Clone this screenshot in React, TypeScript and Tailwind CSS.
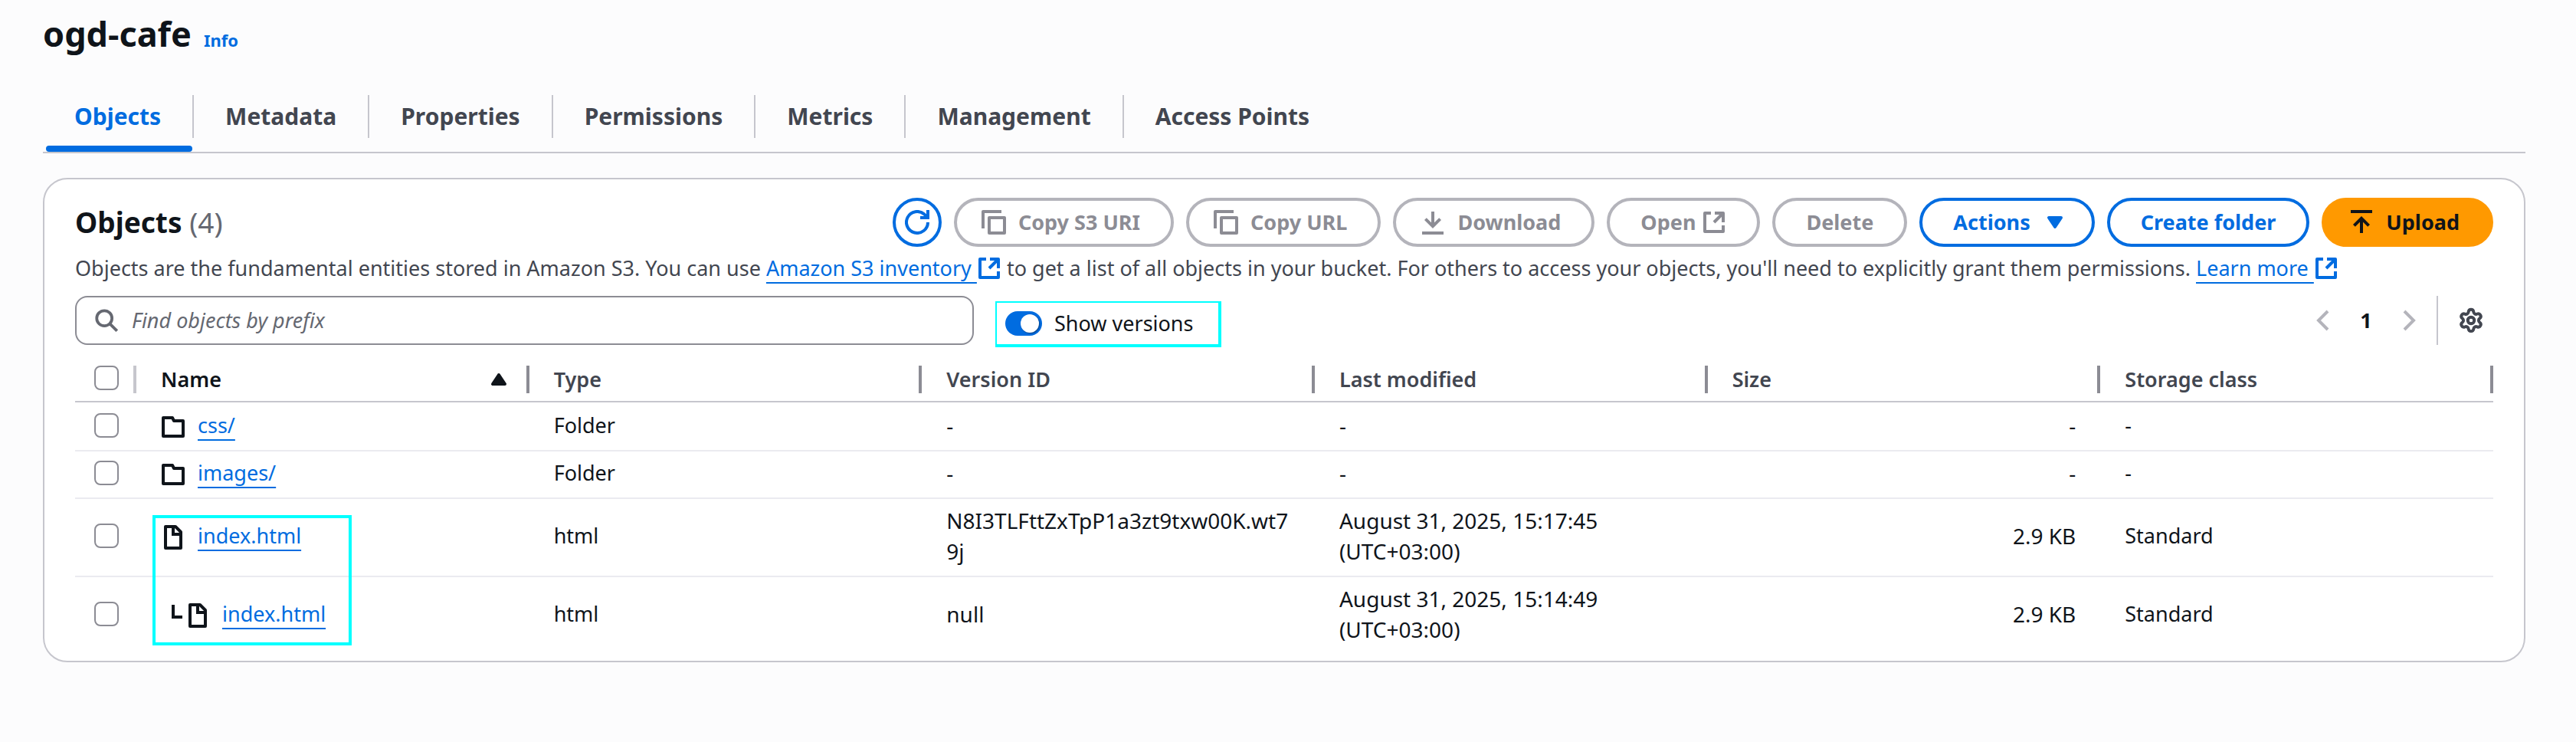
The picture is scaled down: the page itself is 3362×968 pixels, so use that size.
import type { ReactNode } from "react";
import { Settings } from "lucide-react";

type IconProps = { children: ReactNode; className?: string };

function Icon({ children, className = "" }: IconProps) {
  return (
    <svg
      viewBox="0 0 16 16"
      fill="none"
      stroke="currentColor"
      strokeWidth="2"
      aria-hidden="true"
      className={`size-8 shrink-0 ${className}`}
    >
      {children}
    </svg>
  );
}

const CopyIcon = () => (
  <Icon className="-ml-2">
    <path d="M13 1H1v11" strokeLinejoin="round" />
    <path d="M5 5h10v10H5z" strokeLinejoin="round" />
  </Icon>
);

const DownloadIcon = () => (
  <Icon className="-ml-2">
    <path d="M1 15h14M8 1v10M3.2 5.8 8 10.6l4.8-4.8" />
  </Icon>
);

const UploadIcon = () => (
  <Icon className="-ml-2">
    <path d="M1 1h14M8 15V5M3.2 10.2 8 5.4l4.8 4.8" />
  </Icon>
);

const RefreshIcon = () => (
  <Icon>
    <path d="M15 8a7 7 0 1 1-2.3-5.2L15 5" />
    <path d="M15 0v5h-5" />
  </Icon>
);

const ExternalIcon = ({ className = "" }: { className?: string }) => (
  <Icon className={className}>
    <path d="M6 2H2v12h12v-4" strokeLinejoin="round" />
    <path d="M8.5 2H14v6" strokeLinejoin="round" />
    <path d="M14 2 8 8" />
  </Icon>
);

const FolderIcon = () => (
  <Icon className="mt-1">
    <path d="M1.5 2h6l1 2h6v10h-13z" strokeLinejoin="round" />
  </Icon>
);

const FileIcon = () => (
  <Icon className="mt-1">
    <path d="M3 1h6.5L13 4.5V15H3z" strokeLinejoin="round" />
    <path d="M8 1v5h5" />
  </Icon>
);

const BranchIcon = () => (
  <Icon className="mt-1">
    <path d="M8 1v8h6" />
  </Icon>
);

const tabs = ["Objects", "Metadata", "Properties", "Permissions", "Metrics", "Management", "Access Points"];

const columns = ["Name", "Type", "Version ID", "Last modified", "Size", "Storage class"];

type Row = {
  name: string;
  kind: "folder" | "file";
  nested?: boolean;
  type: string;
  version: string;
  modified: string[];
  size: string;
  storage: string;
};

const rows: Row[] = [
  { name: "css/", kind: "folder", type: "Folder", version: "-", modified: ["-"], size: "-", storage: "-" },
  { name: "images/", kind: "folder", type: "Folder", version: "-", modified: ["-"], size: "-", storage: "-" },
  {
    name: "index.html",
    kind: "file",
    type: "html",
    version: "N8I3TLFttZxTpP1a3zt9txw00K.wt79j",
    modified: ["August 31, 2025, 15:17:45", "(UTC+03:00)"],
    size: "2.9 KB",
    storage: "Standard",
  },
  {
    name: "index.html",
    kind: "file",
    nested: true,
    type: "html",
    version: "null",
    modified: ["August 31, 2025, 15:14:49", "(UTC+03:00)"],
    size: "2.9 KB",
    storage: "Standard",
  },
];

const buttonBase =
  "flex h-16 shrink-0 items-center rounded-full border-4 px-10 text-[27px] leading-10 font-bold whitespace-nowrap";
const disabledButton = `${buttonBase} border-[#b4b4bb] text-[#8c8c94]`;
const normalButton = `${buttonBase} border-[#006ce0] text-[#006ce0]`;

const linkText = "underline decoration-2 underline-offset-8 [text-decoration-skip-ink:none]";

function Checkbox({ label }: { label: string }) {
  return (
    <input
      type="checkbox"
      aria-label={label}
      className="block size-8 appearance-none rounded-lg border-2 border-[#8c8c94] bg-white"
    />
  );
}

function ObjectRow({ row, index }: { row: Row; index: number }) {
  const edge = `${index === 0 ? "pt-2.5" : "pt-2"} ${
    index === rows.length - 1 ? "" : "border-b-2 border-[#ebebf0]"
  }`;
  const cell = `pl-8 pr-8 pb-3 ${edge}`;
  const words = `${cell} text-[27px]`;
  const figures = `${cell} text-[28px]`;
  return (
    <tr>
      <td className={`pb-3 pl-[25px] ${edge}`}>
        <Checkbox label={`Select ${row.name}`} />
      </td>
      <td className={`relative ${words}`}>
        <div className="flex items-center">
          {row.nested && <BranchIcon />}
          {row.kind === "folder" ? <FolderIcon /> : <FileIcon />}
          <a href="#" className={`ml-4 text-[#006ce0] ${linkText}`}>
            {row.name}
          </a>
        </div>
        {index === 2 && (
          <div className="pointer-events-none absolute top-[21px] left-[21px] z-10 h-[170px] w-[260px] border-4 border-[#00ffff]" />
        )}
      </td>
      <td className={words}>{row.type}</td>
      <td className={`${figures} break-all`}>{row.version}</td>
      <td className={figures}>
        {row.modified.map((line) => (
          <div key={line}>{line}</div>
        ))}
      </td>
      <td className={`${figures} text-right`}>{row.size}</td>
      <td className={words}>{row.storage}</td>
    </tr>
  );
}

export default function App() {
  return (
    <main className="min-h-screen bg-[#fcfcfd] px-14 pt-3.5 pr-[66px] pb-8 font-['Noto_Sans','Open_Sans',sans-serif] text-[27px] leading-10 text-[#0f141a]">
      <header className="flex items-baseline gap-4">
        <h1 className="text-[45px] leading-[60px] font-bold">ogd-cafe</h1>
        <a href="#" className="text-[22px] font-bold text-[#006ce0]">
          Info
        </a>
      </header>

      <nav role="tablist" className="mt-[50px] flex border-b-2 border-[#c6c6cd]">
        {tabs.map((tab, i) => (
          <button
            key={tab}
            type="button"
            role="tab"
            aria-selected={i === 0}
            className={`relative flex h-[74px] items-start text-[30px] leading-10 font-bold whitespace-nowrap ${
              i === 0 ? "text-[#006ce0]" : "text-[#424650]"
            }`}
          >
            <span className={`h-14 px-[41px] pt-2 ${i < tabs.length - 1 ? "border-r-2 border-[#c6c6cd]" : ""}`}>
              {tab}
            </span>
            {i === 0 && <span className="absolute right-0.5 bottom-0 left-1 h-2 rounded-sm bg-[#006ce0]" />}
          </button>
        ))}
      </nav>

      <section className="mt-8 rounded-[32px] border-2 border-[#c6c6cd] bg-white px-10 pt-6 pb-[9px]">
        <div className="flex items-center justify-between">
          <h2 className="text-[37px] leading-[48px] font-bold">
            Objects <span className="font-normal text-[#656871]">(4)</span>
          </h2>
          <div className="flex gap-4">
            <button
              type="button"
              aria-label="Refresh"
              className="flex size-16 items-center justify-center rounded-full border-4 border-[#006ce0] text-[#006ce0]"
            >
              <RefreshIcon />
            </button>
            <button type="button" disabled className={`${disabledButton} gap-4`}>
              <CopyIcon />
              Copy S3 URI
            </button>
            <button type="button" disabled className={`${disabledButton} gap-4`}>
              <CopyIcon />
              Copy URL
            </button>
            <button type="button" disabled className={`${disabledButton} gap-4`}>
              <DownloadIcon />
              Download
            </button>
            <button type="button" disabled className={`${disabledButton} gap-2`}>
              Open
              <ExternalIcon />
            </button>
            <button type="button" disabled className={disabledButton}>
              Delete
            </button>
            <button type="button" className={`${normalButton} gap-4`}>
              Actions
              <Icon className="-mr-2">
                <path d="M4 5h8l-4 6z" fill="currentColor" strokeLinejoin="round" />
              </Icon>
            </button>
            <button type="button" className={normalButton}>
              Create folder
            </button>
            <button type="button" className={`${buttonBase} gap-4 border-[#ff9900] bg-[#ff9900] text-[#0f141a]`}>
              <UploadIcon />
              Upload
            </button>
          </div>
        </div>

        <p className="mt-2 text-[#424650]">
          Objects are the fundamental entities stored in Amazon S3. You can use{" "}
          <a href="#" className="text-[#006ce0]">
            <span className={`whitespace-pre ${linkText}`}>{"Amazon S3 inventory "}</span>
            <ExternalIcon className="inline-block align-[-6px]" />
          </a>{" "}
          to get a list of all objects in your bucket. For others to access your objects, you'll need to explicitly
          grant them permissions.{" "}
          <a href="#" className="text-[#006ce0]">
            <span className={`whitespace-pre ${linkText}`}>{"Learn more "}</span>
            <ExternalIcon className="inline-block align-[-6px]" />
          </a>
        </p>

        <div className="mt-4 flex items-start">
          <label className="flex h-16 w-full max-w-[1173px] items-center gap-[18px] rounded-2xl border-2 border-[#8c8c94] bg-white px-6 text-[#656871]">
            <Icon className="size-[30px]">
              <circle cx="6.5" cy="6.5" r="5.3" />
              <path d="m10.3 10.3 5 5" />
            </Icon>
            <input
              type="search"
              aria-label="Find objects by prefix"
              placeholder="Find objects by prefix"
              className="w-full bg-transparent text-[27px] leading-10 italic outline-none placeholder:text-[#656871]"
            />
          </label>
          <label className="mt-[7px] ml-7 flex h-[60px] shrink-0 items-center gap-4 border-2 border-r-4 border-b-4 border-[#00ffff] pr-8 pl-[11px] whitespace-nowrap">
            <input
              type="checkbox"
              role="switch"
              defaultChecked
              className="relative h-8 w-12 shrink-0 appearance-none rounded-full bg-[#006ce0] before:absolute before:top-1 before:right-1 before:size-6 before:rounded-full before:bg-white before:shadow-[1px_1px_2px_rgba(0,0,0,0.4)]"
            />
            Show versions
          </label>
          <div className="ml-auto flex h-16 items-center pr-3">
            <button type="button" aria-label="Previous page" disabled className="text-[#b4b4bb]">
              <Icon>
                <path d="M11 2 5 8l6 6" />
              </Icon>
            </button>
            <button type="button" className="w-20 text-center font-bold">
              1
            </button>
            <button type="button" aria-label="Next page" disabled className="text-[#b4b4bb]">
              <Icon>
                <path d="m5 2 6 6-6 6" />
              </Icon>
            </button>
            <span className="ml-5 h-16 border-l-2 border-[#c6c6cd]" />
            <button type="button" aria-label="Preferences" className="ml-6.5 text-[#424650]">
              <Settings size={34} strokeWidth={2.8} />
            </button>
          </div>
        </div>

        <table className="mt-3.5 w-full table-fixed border-separate border-spacing-0 text-left">
          <colgroup>
            <col className="w-20" />
            {columns.map((column) => (
              <col key={column} />
            ))}
          </colgroup>
          <thead>
            <tr>
              <th className="border-b-2 border-[#c6c6cd] py-2.5 pl-[25px]">
                <div className="flex items-start justify-between">
                  <Checkbox label="Select all objects" />
                  <span className="h-9 w-1 bg-[#c6c6cd]" />
                </div>
              </th>
              {columns.map((column, i) => (
                <th
                  key={column}
                  className={`border-b-2 border-[#c6c6cd] py-2.5 pl-8 leading-9 font-semibold ${
                    i === 0 ? "text-[#0f141a]" : "text-[#424650]"
                  }`}
                >
                  <div className="flex items-center">
                    {column}
                    <span className="ml-auto flex items-center gap-5">
                      {i === 0 && (
                        <Icon>
                          <path d="M4 11h8L8 5z" fill="currentColor" strokeLinejoin="round" />
                        </Icon>
                      )}
                      <span className="h-9 w-1 bg-[#8c8c94]" />
                    </span>
                  </div>
                </th>
              ))}
            </tr>
          </thead>
          <tbody>
            {rows.map((row, i) => (
              <ObjectRow key={i} row={row} index={i} />
            ))}
          </tbody>
        </table>
      </section>
    </main>
  );
}
